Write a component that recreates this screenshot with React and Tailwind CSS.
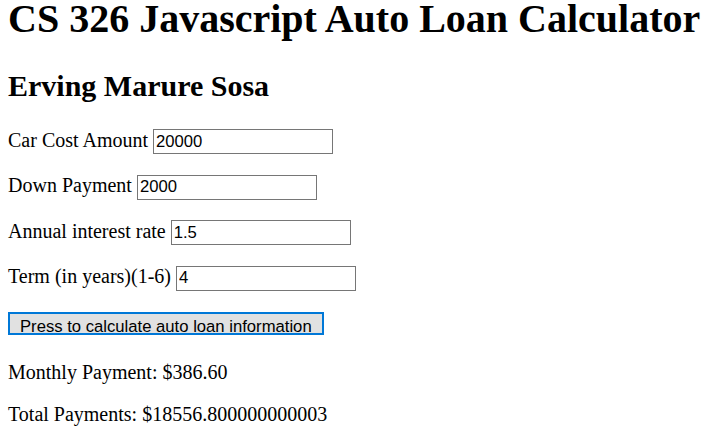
import React from "react";

const campos = [
  { rotulo: "Car Cost Amount", valor: "20000" },
  { rotulo: "Down Payment", valor: "2000" },
  { rotulo: "Annual interest rate", valor: "1.5" },
  { rotulo: "Term (in years)(1-6)", valor: "4" },
];

export default function App() {
  return (
    <div className="pl-2 bg-white text-black font-['Liberation_Serif','Times_New_Roman',serif] text-[20px] leading-[23px]">
      <h1 className="text-[40px] font-bold leading-[38px] mb-[31px] whitespace-nowrap">
        CS 326 Javascript Auto Loan Calculator
      </h1>
      <h2 className="text-[30px] font-bold leading-[34.5px] mb-[25px]">Erving Marure Sosa</h2>

      {campos.map((c) => (
        <p key={c.rotulo} className="mb-5">
          {c.rotulo}{" "}
          <input
            type="text"
            defaultValue={c.valor}
            className="w-[180px] h-[25px] border border-[#767676] bg-white px-[2px] py-0 align-baseline font-['Liberation_Sans',Arial,sans-serif] text-[16.67px] leading-normal text-black outline-none"
          />
        </p>
      ))}

      <p className="pt-[1px] mb-[24px]">
        <button className="h-[23px] border-2 border-[#0078d7] bg-[#e1e1e1] px-[10px] py-0 align-baseline font-['Liberation_Sans',Arial,sans-serif] text-[16.67px] leading-normal text-black">
          Press to calculate auto loan information
        </button>
      </p>

      <p className="mb-[19px]">Monthly Payment: $386.60</p>
      <p className="mb-5">Total Payments: $18556.800000000003</p>
    </div>
  );
}
